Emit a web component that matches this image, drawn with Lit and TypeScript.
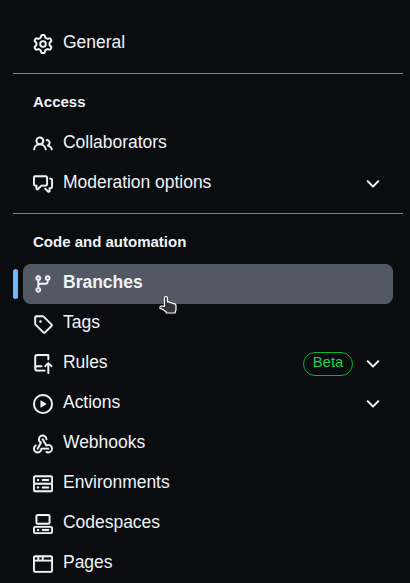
import { LitElement, html, css, svg, nothing } from "lit";
import { customElement, property } from "lit/decorators.js";

const ICONS: Record<string, string> = {
  gear: "M8 0a8.2 8.2 0 0 1 .701.031C9.444.095 9.99.645 10.16 1.29l.288 1.107c.018.066.079.158.212.224.231.114.454.243.668.386.123.082.233.09.299.071l1.103-.303c.644-.176 1.392.021 1.82.63.27.385.506.792.704 1.218.315.675.111 1.422-.364 1.891l-.814.806c-.049.048-.098.147-.088.294.016.257.016.515 0 .772-.01.147.038.246.088.294l.814.806c.475.469.679 1.216.364 1.891a7.977 7.977 0 0 1-.704 1.217c-.428.61-1.176.807-1.82.63l-1.102-.302c-.067-.019-.177-.011-.3.071a5.909 5.909 0 0 1-.668.386c-.133.066-.194.158-.211.224l-.29 1.106c-.168.646-.715 1.196-1.458 1.26a8.006 8.006 0 0 1-1.402 0c-.743-.064-1.289-.614-1.458-1.26l-.289-1.106c-.018-.066-.079-.158-.212-.224a5.738 5.738 0 0 1-.668-.386c-.123-.082-.233-.09-.299-.071l-1.103.303c-.644.176-1.392-.021-1.82-.63a8.12 8.12 0 0 1-.704-1.218c-.315-.675-.111-1.422.363-1.891l.815-.806c.05-.048.098-.147.088-.294a6.214 6.214 0 0 1 0-.772c.01-.147-.038-.246-.088-.294l-.815-.806C.635 6.045.431 5.298.746 4.623a7.92 7.92 0 0 1 .704-1.217c.428-.61 1.176-.807 1.82-.63l1.102.302c.067.019.177.011.3-.071.214-.143.437-.272.668-.386.133-.066.194-.158.211-.224l.29-1.106C6.009.645 6.556.095 7.299.03 7.53.01 7.764 0 8 0Zm-.571 1.525c-.036.003-.108.036-.137.146l-.289 1.105c-.147.561-.549.967-.998 1.189-.173.086-.34.183-.5.29-.417.278-.97.423-1.529.27l-1.103-.303c-.109-.03-.175.016-.195.045-.22.312-.412.644-.573.99-.014.031-.021.11.059.19l.815.806c.411.406.562.957.53 1.456a4.709 4.709 0 0 0 0 .582c.032.499-.119 1.05-.53 1.456l-.815.806c-.081.08-.073.159-.059.19.162.346.353.677.573.989.02.03.085.076.195.046l1.102-.303c.56-.153 1.113-.008 1.53.27.161.107.328.204.501.29.447.222.85.629.997 1.189l.289 1.105c.029.109.101.143.137.146a6.6 6.6 0 0 0 1.142 0c.036-.003.108-.036.137-.146l.289-1.105c.147-.561.549-.967.998-1.189.173-.086.34-.183.5-.29.417-.278.97-.423 1.529-.27l1.103.303c.109.029.175-.016.195-.045.22-.313.411-.644.573-.99.014-.031.021-.11-.059-.19l-.815-.806c-.411-.406-.562-.957-.53-1.456a4.709 4.709 0 0 0 0-.582c-.032-.499.119-1.05.53-1.456l.815-.806c.081-.08.073-.159.059-.19a6.464 6.464 0 0 0-.573-.989c-.02-.03-.085-.076-.195-.046l-1.102.303c-.56.153-1.113.008-1.53-.27a4.44 4.44 0 0 0-.501-.29c-.447-.222-.85-.629-.997-1.189l-.289-1.105c-.029-.11-.101-.143-.137-.146a6.6 6.6 0 0 0-1.142 0ZM11 8a3 3 0 1 1-6 0 3 3 0 0 1 6 0ZM9.5 8a1.5 1.5 0 1 0-3.001.001A1.5 1.5 0 0 0 9.5 8Z",
  people: "M2 5.5a3.5 3.5 0 1 1 5.898 2.549 5.508 5.508 0 0 1 3.034 4.084.75.75 0 1 1-1.482.235 4 4 0 0 0-7.9 0 .75.75 0 0 1-1.482-.236A5.507 5.507 0 0 1 3.102 8.05 3.493 3.493 0 0 1 2 5.5ZM11 4a3.001 3.001 0 0 1 2.22 5.018 5.01 5.01 0 0 1 2.56 3.012.749.749 0 0 1-.885.954.752.752 0 0 1-.549-.514 3.507 3.507 0 0 0-2.522-2.372.75.75 0 0 1-.574-.73v-.352a.75.75 0 0 1 .416-.672A1.5 1.5 0 0 0 11 5.5.75.75 0 0 1 11 4Zm-5.5-.5a2 2 0 1 0-.001 3.999A2 2 0 0 0 5.5 3.5Z",
  discussion: "M1.75 1h8.5c.966 0 1.75.784 1.75 1.75v5.5A1.75 1.75 0 0 1 10.25 10H7.061l-2.574 2.573A1.458 1.458 0 0 1 2 11.543V10h-.25A1.75 1.75 0 0 1 0 8.25v-5.5C0 1.784.784 1 1.75 1ZM1.5 2.75v5.5c0 .138.112.25.25.25h1a.75.75 0 0 1 .75.75v2.19l2.72-2.72a.749.749 0 0 1 .53-.22h3.5a.25.25 0 0 0 .25-.25v-5.5a.25.25 0 0 0-.25-.25h-8.5a.25.25 0 0 0-.25.25Zm13 2a.25.25 0 0 0-.25-.25h-.5a.75.75 0 0 1 0-1.5h.5c.966 0 1.75.784 1.75 1.75v5.5A1.75 1.75 0 0 1 14.25 12H14v1.543a1.458 1.458 0 0 1-2.487 1.03L9.22 12.28a.749.749 0 0 1 .326-1.275.749.749 0 0 1 .734.215l2.22 2.22v-2.19a.75.75 0 0 1 .75-.75h1a.25.25 0 0 0 .25-.25Z",
  branch: "M9.5 3.25a2.25 2.25 0 1 1 3 2.122V6A2.5 2.5 0 0 1 10 8.5H6a1 1 0 0 0-1 1v1.128a2.251 2.251 0 1 1-1.5 0V5.372a2.25 2.25 0 1 1 1.5 0v1.836A2.493 2.493 0 0 1 6 7h4a1 1 0 0 0 1-1v-.628A2.25 2.25 0 0 1 9.5 3.25Zm-6 0a.75.75 0 1 0 1.5 0 .75.75 0 0 0-1.5 0Zm8.25-.75a.75.75 0 1 0 0 1.5.75.75 0 0 0 0-1.5ZM4.25 12a.75.75 0 1 0 0 1.5.75.75 0 0 0 0-1.5Z",
  tag: "M1 7.775V2.75C1 1.784 1.784 1 2.75 1h5.025c.464 0 .91.184 1.238.513l6.25 6.25a1.75 1.75 0 0 1 0 2.474l-5.026 5.026a1.75 1.75 0 0 1-2.474 0l-6.25-6.25A1.752 1.752 0 0 1 1 7.775Zm1.5 0c0 .066.026.13.073.177l6.25 6.25a.25.25 0 0 0 .354 0l5.025-5.025a.25.25 0 0 0 0-.354l-6.25-6.25a.25.25 0 0 0-.177-.073H2.75a.25.25 0 0 0-.25.25ZM6 5a1 1 0 1 1 0 2 1 1 0 0 1 0-2Z",
  push: "M1 2.5A2.5 2.5 0 0 1 3.5 0h8.75a.75.75 0 0 1 .75.75v3.5a.75.75 0 0 1-1.5 0V1.5h-8a1 1 0 0 0-1 1v6.708A2.493 2.493 0 0 1 3.5 9h3.25a.75.75 0 0 1 0 1.5H3.5a1 1 0 0 0 0 2h5.75a.75.75 0 0 1 0 1.5H3.5A2.5 2.5 0 0 1 1 11.5Zm13.23 7.79h-.001l-1.224-1.224v6.184a.75.75 0 0 1-1.5 0V9.066L10.28 10.29a.75.75 0 0 1-1.06-1.061l2.505-2.504a.75.75 0 0 1 1.06 0L15.29 9.23a.751.751 0 0 1-.018 1.042.751.751 0 0 1-1.042.018Z",
  play: "M8 0a8 8 0 1 1 0 16A8 8 0 0 1 8 0ZM1.5 8a6.5 6.5 0 1 0 13 0 6.5 6.5 0 0 0-13 0Zm4.879-2.773 4.264 2.559a.25.25 0 0 1 0 .428l-4.264 2.559A.25.25 0 0 1 6 10.559V5.442a.25.25 0 0 1 .379-.215Z",
  webhook: "M5.5 4.25a2.25 2.25 0 0 1 4.5 0 .75.75 0 0 0 1.5 0 3.75 3.75 0 1 0-6.14 2.889l-2.272 4.258a.75.75 0 0 0 1.324.706L7 7.25a.75.75 0 0 0-.309-1.015A2.25 2.25 0 0 1 5.5 4.25ZM7.364 3.607a.75.75 0 0 1 1.03.257l2.608 4.349a3.75 3.75 0 1 1-.628 6.785.75.75 0 0 1 .752-1.299 2.25 2.25 0 1 0-.033-3.88.75.75 0 0 1-1.03-.256L7.107 4.636a.75.75 0 0 1 .257-1.03ZM2.9 8.776A.75.75 0 0 1 2.625 9.8 2.25 2.25 0 1 0 6 11.75a.75.75 0 0 1 .75-.751h5.5a.75.75 0 0 1 0 1.5H7.425a3.751 3.751 0 1 1-5.55-3.998.75.75 0 0 1 1.024.274Z",
  server: "M1.75 1h12.5c.966 0 1.75.784 1.75 1.75v4c0 .372-.116.717-.314 1 .198.283.314.628.314 1v4a1.75 1.75 0 0 1-1.75 1.75H1.75A1.75 1.75 0 0 1 0 12.75v-4c0-.358.109-.707.314-1a1.739 1.739 0 0 1-.314-1v-4C0 1.784.784 1 1.75 1ZM1.5 2.75v4c0 .138.112.25.25.25h12.5a.25.25 0 0 0 .25-.25v-4a.25.25 0 0 0-.25-.25H1.75a.25.25 0 0 0-.25.25Zm.25 5.75a.25.25 0 0 0-.25.25v4c0 .138.112.25.25.25h12.5a.25.25 0 0 0 .25-.25v-4a.25.25 0 0 0-.25-.25ZM7 4.75A.75.75 0 0 1 7.75 4h4.5a.75.75 0 0 1 0 1.5h-4.5A.75.75 0 0 1 7 4.75ZM7.75 10h4.5a.75.75 0 0 1 0 1.5h-4.5a.75.75 0 0 1 0-1.5ZM3 4.75A.75.75 0 0 1 3.75 4h.5a.75.75 0 0 1 0 1.5h-.5A.75.75 0 0 1 3 4.75ZM3.75 10h.5a.75.75 0 0 1 0 1.5h-.5a.75.75 0 0 1 0-1.5Z",
  codespaces: "M0 11.25c0-.966.784-1.75 1.75-1.75h12.5c.966 0 1.75.784 1.75 1.75v3A1.75 1.75 0 0 1 14.25 16H1.75A1.75 1.75 0 0 1 0 14.25Zm2-9.5C2 .784 2.784 0 3.75 0h8.5C13.216 0 14 .784 14 1.75v5a1.75 1.75 0 0 1-1.75 1.75h-8.5A1.75 1.75 0 0 1 2 6.75Zm1.75-.25a.25.25 0 0 0-.25.25v5c0 .138.112.25.25.25h8.5a.25.25 0 0 0 .25-.25v-5a.25.25 0 0 0-.25-.25Zm-2 9.5a.25.25 0 0 0-.25.25v3c0 .138.112.25.25.25h12.5a.25.25 0 0 0 .25-.25v-3a.25.25 0 0 0-.25-.25ZM7 12.75a.75.75 0 0 1 .75-.75h4.5a.75.75 0 0 1 0 1.5h-4.5a.75.75 0 0 1-.75-.75Zm-4 0a.75.75 0 0 1 .75-.75h.5a.75.75 0 0 1 0 1.5h-.5a.75.75 0 0 1-.75-.75Z",
  browser: "M0 2.75C0 1.784.784 1 1.75 1h12.5c.966 0 1.75.784 1.75 1.75v10.5A1.75 1.75 0 0 1 14.25 15H1.75A1.75 1.75 0 0 1 0 13.25ZM14.5 6h-13v7.25c0 .138.112.25.25.25h12.5a.25.25 0 0 0 .25-.25Zm-6-3.5v2h6V2.75a.25.25 0 0 0-.25-.25ZM5 2.5v2h2v-2Zm-3.25 0a.25.25 0 0 0-.25.25V4.5h2v-2Z",
  chevron: "M12.78 5.22a.749.749 0 0 1 0 1.06l-4.25 4.25a.749.749 0 0 1-1.06 0L3.22 6.28a.749.749 0 1 1 1.06-1.06L8 8.939l3.72-3.719a.749.749 0 0 1 1.06 0Z",
};

const icon = (name: string) =>
  html`<svg class="icon" viewBox="0 0 16 16" aria-hidden="true">${svg`<path d=${ICONS[name]}></path>`}</svg>`;

interface Item {
  icon: string;
  label: string;
  active?: boolean;
  expandable?: boolean;
  badge?: string;
}

@customElement("nav-item")
class NavItem extends LitElement {
  @property({ attribute: false }) item!: Item;

  static styles = css`
    :host {
      display: block;
      position: relative;
      margin: 0 10px;
    }
    .row {
      display: flex;
      align-items: center;
      height: 40px;
      box-sizing: border-box;
      padding: 0 10px;
      border-radius: 7.5px;
      color: #f0f3f6;
    }
    .row.active {
      background: #525964;
      font-weight: 700;
    }
    .marker {
      position: absolute;
      left: -10px;
      top: 5px;
      width: 5px;
      height: 30px;
      border-radius: 2.5px;
      background: #71b7ff;
    }
    .icon {
      flex: none;
      width: 20px;
      height: 20px;
      fill: currentColor;
      stroke: currentColor;
      stroke-width: 0.1;
    }
    .label {
      flex: 1;
      margin-left: 10px;
      padding-bottom: 4px;
      line-height: 24px;
      letter-spacing: -0.03px;
      white-space: nowrap;
    }
    .active .label {
      letter-spacing: 0;
    }
    .badge {
      box-sizing: border-box;
      width: 50px;
      height: 24px;
      margin-right: 10px;
      border: 1px solid #09b43a;
      border-radius: 12px;
      font-size: 15px;
      line-height: 18px;
      letter-spacing: -0.05px;
      text-align: center;
      color: #26cd4d;
    }
    .cursor {
      position: absolute;
      left: 136px;
      top: 31px;
      width: 20px;
      height: 20px;
      z-index: 1;
    }
  `;

  render() {
    const { icon: name, label, active, expandable, badge } = this.item;
    return html`
      ${active ? html`<span class="marker"></span>` : nothing}
      <div class="row ${active ? "active" : ""}">
        ${icon(name)}
        <span class="label">${label}</span>
        ${badge ? html`<span class="badge">${badge}</span>` : nothing}
        ${expandable ? icon("chevron") : nothing}
      </div>
      ${active
        ? html`<svg class="cursor" viewBox="0 0 20 20">
            <path
              d="M5.5 11.500V3a1.500 1.500 0 0 1 3 0V7q1.700-.4 2.700.6 1.600-.2 2.500.7 3.300 0 3.300 2.500v3.700q0 1.300-.9 2.300v1.200H7.200v-1.200L2 13.600H1.200c-1-1.700 1-3.200 2.600-2.400Z"
              fill="#333"
              stroke="#fff"
              stroke-width="1.2"
              stroke-linejoin="round"
            />
          </svg>`
        : nothing}
    `;
  }
}

@customElement("app-root")
class AppRoot extends LitElement {
  static styles = css`
    :host {
      display: block;
      box-sizing: border-box;
      height: 583px;
      overflow: hidden;
      padding: 24px 7px 0 13px;
      background: #0a0c10;
      color: #f0f3f6;
      font-family: "Liberation Sans", Arial, sans-serif;
      font-size: 17.5px;
    }
    .section {
      margin-top: 9px;
      border-top: 1px solid #7a828e;
      padding-top: 10px;
    }
    .heading {
      margin: 0;
      height: 40px;
      box-sizing: border-box;
      padding: 8px 20px 0;
      font-size: 15px;
      font-weight: 700;
      line-height: 20px;
    }
  `;

  private general: Item = { icon: "gear", label: "General" };

  private sections: { title: string; items: Item[] }[] = [
    {
      title: "Access",
      items: [
        { icon: "people", label: "Collaborators" },
        { icon: "discussion", label: "Moderation options", expandable: true },
      ],
    },
    {
      title: "Code and automation",
      items: [
        { icon: "branch", label: "Branches", active: true },
        { icon: "tag", label: "Tags" },
        { icon: "push", label: "Rules", badge: "Beta", expandable: true },
        { icon: "play", label: "Actions", expandable: true },
        { icon: "webhook", label: "Webhooks" },
        { icon: "server", label: "Environments" },
        { icon: "codespaces", label: "Codespaces" },
        { icon: "browser", label: "Pages" },
      ],
    },
  ];

  render() {
    return html`
      <nav-item .item=${this.general}></nav-item>
      ${this.sections.map(
        (section) => html`<section class="section">
          <h3 class="heading">${section.title}</h3>
          ${section.items.map((item) => html`<nav-item .item=${item}></nav-item>`)}
        </section>`
      )}
    `;
  }
}
